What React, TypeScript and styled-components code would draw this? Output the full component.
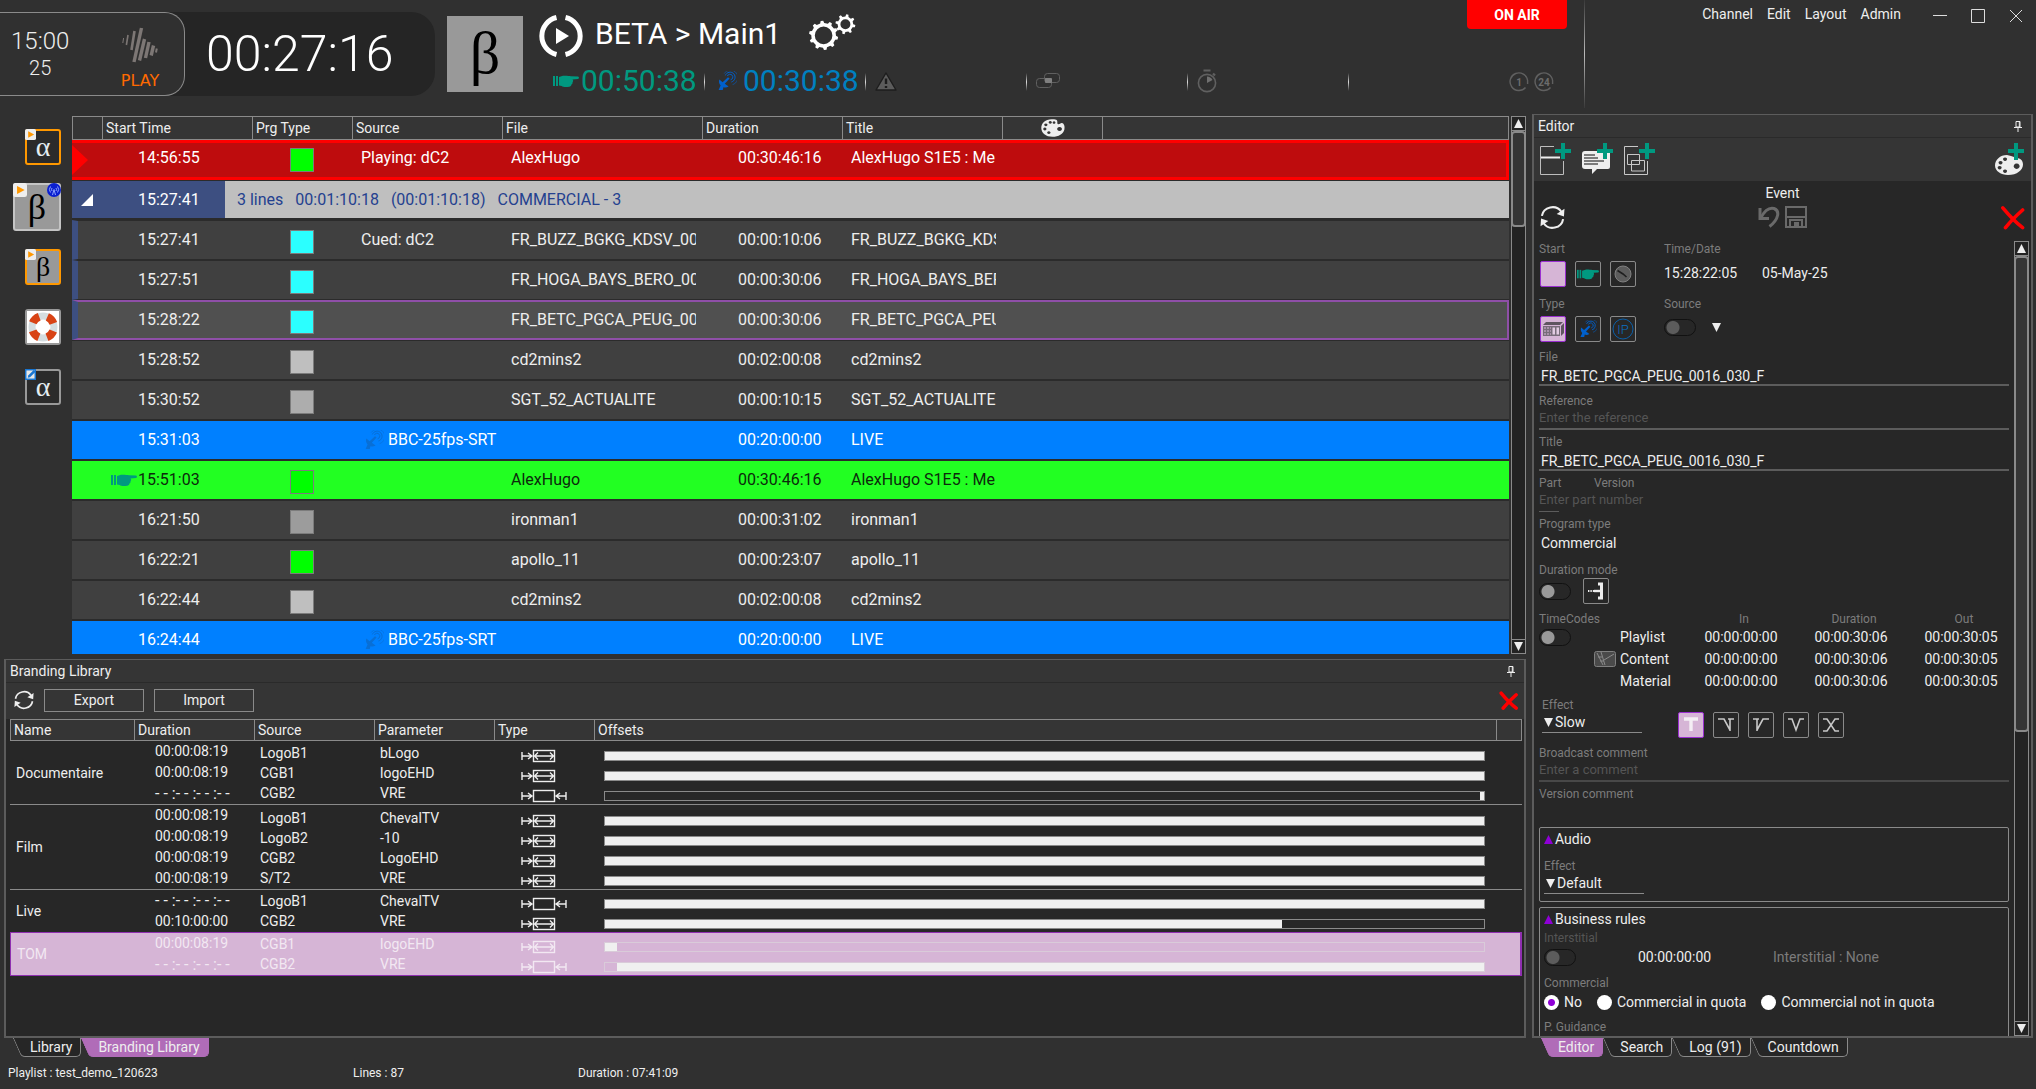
import React from "react";
import styled, { createGlobalStyle, css } from "styled-components";

const c = {
  page: "#303030",
  bar: "#353535",
  well: "#272727",
  row: "#404040",
  line: "#8a8a8a",
  frame: "#5c5c5c",
  text: "#eeeeee",
  dim: "#7c7c7c",
  dimmer: "#555555",
  teal: "#009980",
  blue: "#0080c0",
  dish: "#0060cc",
  pink: "#d6b5d6",
  violet: "#b06cb8",
  purple: "#8f00d6",
};

const Global = createGlobalStyle`
  * { box-sizing: border-box; }
  body { margin: 0; background: ${c.page}; }
  body, button, input, select, table { font-family: Roboto, "Liberation Sans", sans-serif; color: ${c.text}; }
  button { padding: 0; background: none; border: 0; }
  svg { display: block; flex: none; }
`;

/* ---------- icons ---------- */

type IconProps = { size?: number; color?: string };

const Hand = ({ size = 26, color = c.teal }: IconProps) => (
  <svg width={size} height={size / 2} viewBox="0 0 26 13" fill={color}>
    <rect x="0" y="1" width="2" height="10" />
    <rect x="3" y="1" width="2" height="10" />
    <path d="M6 2 L10 .8 C13 .5 16 1 18 1.2 L25 1.4 C26.3 1.8 26.3 3.6 25 4 L19.5 4.4 C20.5 5.4 20.3 6.6 19.5 7.2 C19.8 8.4 19.3 9.2 18.4 9.6 C18.3 11 17.4 11.6 16.2 11.7 C13 12.4 10 12.2 8.6 11 L6 10.4Z" />
  </svg>
);

const Dish = ({ size = 20, color = c.dish }: IconProps) => (
  <svg width={size} height={size} viewBox="0 0 20 20" fill="none" stroke={color}>
    <path d="M2.4 8.4 L5.6 11.2 L11 6.2 L12.6 7.6 L7.8 12.8 L11.6 15.6 C9.5 16.8 7.8 16.8 6.4 16.2 L5.8 19 H1.6 L3.6 14.4 C2 12.6 1.6 10.4 2.4 8.4Z" fill={color} stroke="none" />
    <path d="M8.4 4.4 A5 5 0 1 1 14.4 11" strokeWidth="1" />
    <path d="M7.2 2.6 A7.4 7.4 0 1 1 15.6 13.6" strokeWidth="1" opacity=".6" />
    <path d="M10.4 5 A2.8 2.8 0 1 1 13.6 8.8" strokeWidth="1" />
  </svg>
);

const Refresh = ({ size = 24 }: IconProps) => (
  <svg width={size} height={size} viewBox="0 0 24 24" fill="none" stroke={c.text} strokeWidth="2">
    <path d="M1.8 10.5 A10.3 10 0 0 1 20.5 6.5" />
    <path d="M22.2 13.5 A10.3 10 0 0 1 3.5 17.5" />
    <path d="M23.5 3.5 L23 11 L16 8.6Z M.5 20.5 L1 13 L8 15.4Z" fill={c.text} stroke="none" />
  </svg>
);

const RedX = ({ size = 25, bold = 3.6 }: IconProps & { bold?: number }) => (
  <svg width={size} height={size} viewBox="0 0 25 25" fill="none" stroke="#ff0000" strokeLinecap="round">
    <path d="M2.8 2.8 C8 9 16 17.5 22.6 22.6" strokeWidth={bold} />
    <path d="M22.6 5 C17 10 10 17 5.5 22.6" strokeWidth={bold} />
  </svg>
);

const Pin = () => (
  <svg width="8" height="11" viewBox="0 0 8 11" fill="none" stroke={c.text}>
    <path d="M2 .5 H6 V6 H2Z M0 6.5 H8 M4 6.5 V11" />
    <path d="M5.3 1 V6" />
  </svg>
);

const Triangle = ({ up, color = c.text, size = 9 }: IconProps & { up?: boolean }) => (
  <svg width={size} height={size} viewBox="0 0 9 9" fill={color}>
    <path d={up ? "M4.5 0 L9 9 H0Z" : "M0 0 H9 L4.5 9Z"} />
  </svg>
);

const Palette = ({ size = 24 }: IconProps) => (
  <svg width={size} height={(size * 3) / 4} viewBox="0 0 24 18" fill={c.text}>
    <path
      fillRule="evenodd"
      d="M10.5 .2 C4.5 .2 .3 4 .3 9 C.3 14 4.8 17.8 11.5 17.8 C17.5 17.8 22.5 15 23.4 10.5 C24 7 23 4.6 21.2 4 C19.4 3.6 18.8 5.4 17.2 5.2 C15.4 4.8 17.4 1.8 15.2 .8 C14 .3 12.2 .2 10.5 .2Z
      M9.2 2 a1.6 1.4 0 1 0 .1 0Z M4.8 4.4 a1.6 1.4 0 1 0 .1 0Z M3.8 8.6 a1.6 1.4 0 1 0 .1 0Z M7.8 12.2 a1.7 1.4 0 1 0 .1 0Z M13 2.2 a1.4 1.3 0 1 0 .1 0Z M18.5 8 a2.4 2 0 1 0 .1 0Z"
    />
  </svg>
);

const Plus = () => <path d="M23 0 V16 M15 8 H31" stroke={c.teal} strokeWidth="4" fill="none" />;

const AddEvent = () => (
  <svg width="31" height="32" viewBox="0 0 31 32" fill="none" stroke={c.text}>
    <path d="M14 3.5 H.5 V31.5 H23.5 V18" stroke="#bdbdbd" />
    <path d="M1 14.5 H20" strokeWidth="2" />
    <Plus />
  </svg>
);

const AddComment = () => (
  <svg width="31" height="32" viewBox="0 0 31 32" fill={c.text}>
    <path d="M3 8 H27 Q28 8 28 10 V24 Q28 26 26 26 H15 L10 31 V26 H3 Q0 26 0 23 V11 Q0 8 3 8Z" />
    <path d="M2 12 H13 M2 15 H16 M2 18 H22 M2 21 H16" stroke="#555" strokeWidth="1.5" />
    <Plus />
  </svg>
);

const AddGroup = () => (
  <svg width="31" height="32" viewBox="0 0 31 32" fill="none" stroke="#c8c8c8">
    <path d="M14 3.5 H.5 V31.5 H23.5 V18" />
    <path d="M3.5 11.5 H15.5 V21.5 H3.5Z" />
    <path d="M7.5 17.5 H20.5 V28 H7.5Z" />
    <Plus />
  </svg>
);

const AddPalette = () => (
  <svg width="30" height="32" viewBox="0 0 30 32" fill={c.text}>
    <path
      fillRule="evenodd"
      d="M12 12 C5 12 0 17 0 22.5 C0 28 6 32 13 32 C22 32 28 27 28 21.5 C28 17 25 15.5 22 15 L16 13Z M10 14.5 a2 1.7 0 1 0 .1 0Z M5.5 18 a2 1.7 0 1 0 .1 0Z M4.6 23 a2 1.7 0 1 0 .1 0Z M10 26.5 a2 1.7 0 1 0 .1 0Z M21.6 20.5 a3 2.7 0 1 0 .1 0Z"
    />
    <path d="M21 0 V17 M13 8 H29" stroke={c.teal} strokeWidth="4" />
  </svg>
);

const Undo = () => (
  <svg width="22" height="22" viewBox="0 0 22 22" fill="none" stroke="#6a6a6a" strokeWidth="3">
    <path d="M2 2 V12.5 H11" />
    <path d="M3 11.5 C7 4 12 1.5 16 2.5 C22 4.5 21 13 11.5 20.5" />
  </svg>
);

const Save = () => (
  <svg width="22" height="22" viewBox="0 0 22 22" fill="none" stroke="#6a6a6a" strokeWidth="2">
    <path d="M1 1 H21 V21 H1Z" />
    <path d="M1 11 H21 M5 21 V14 H17 V21" />
    <rect x="9" y="16" width="5" height="5" fill="#6a6a6a" stroke="none" />
  </svg>
);

const PlayRing = () => (
  <svg width="44" height="44" viewBox="0 0 44 44" fill="none" stroke="#fff" strokeWidth="5">
    <path d="M17.5 3.5 A19 19 0 0 0 17.5 40.5 M26.5 3.5 A19 19 0 0 1 26.5 40.5" />
    <path d="M17 14 L30 22 L17 30Z" fill="#fff" stroke="none" />
  </svg>
);

function gearPath(cx: number, cy: number, r: number, tooth: number, hole: number, n: number) {
  const pts: string[] = [];
  const step = (Math.PI * 2) / n;
  for (let i = 0; i < n; i++) {
    const a = i * step + 0.2;
    const w = step * 0.2;
    [[a - w * 1.3, r], [a - w * 0.7, r + tooth], [a + w * 0.7, r + tooth], [a + w * 1.3, r]].forEach(([t, d]) =>
      pts.push(`${(cx + Math.cos(t) * d).toFixed(2)} ${(cy + Math.sin(t) * d).toFixed(2)}`)
    );
  }
  return `M${pts.join("L")}Z M${cx - hole} ${cy} a${hole} ${hole} 0 1 0 ${hole * 2} 0 a${hole} ${hole} 0 1 0 ${-hole * 2} 0Z`;
}

const Gears = () => (
  <svg width="47" height="36" viewBox="0 0 47 36" fill="#fff" fillRule="evenodd">
    <path d={gearPath(14.6, 21.4, 12.4, 2.2, 8.8, 10)} />
    <path d={gearPath(36.4, 10.2, 7.8, 2.2, 5, 8)} />
  </svg>
);

const PlayLogo = () => (
  <svg width="36" height="36" viewBox="0 0 36 36" stroke="#7d7775" strokeWidth="3.4" fill="none">
    <path d="M1.6 11 L.8 16" strokeWidth="1" />
    <path d="M6 8 L4.4 18" strokeWidth="1.6" />
    <path d="M12.5 4 L9.5 23" strokeWidth="2.6" />
    <path d="M19.5 1 L12 35" />
    <path d="M22.5 12 L17.5 33.5" />
    <path d="M27 15 L23.5 31" />
    <path d="M31.5 18.5 L29.2 28.5" />
    <path d="M34.8 21.5 L34 25.5" strokeWidth="2" />
  </svg>
);

const Warning = () => (
  <svg width="22" height="19" viewBox="0 0 22 19" fill="#5c5c5c" stroke="#1d1d1d">
    <path d="M11 1 L21 18 H1Z" strokeLinejoin="round" strokeWidth="1.4" />
    <path d="M11 6.5 V12 M11 14 V16" stroke="#1d1d1d" strokeWidth="2.4" />
  </svg>
);

const Chips = () => (
  <svg width="24" height="16" viewBox="0 0 24 16" fill="none" stroke="#606060">
    <rect x="8.5" y=".5" width="15" height="9" rx="3" />
    <rect x=".5" y="5.5" width="15" height="9" rx="3" />
    <rect x="9" y="5" width="7" height="5" rx="1" fill="#808080" stroke="none" />
  </svg>
);

const Stopwatch = () => (
  <svg width="20" height="24" viewBox="0 0 20 24" fill="none" stroke="#606060" strokeWidth="1.6">
    <circle cx="10" cy="14" r="8.6" />
    <path d="M6.5 1.5 H13.5 M16 4.5 L18 6.5" strokeWidth="2.2" />
    <path d="M10 14 V7.5 A6.5 6.5 0 0 1 15.5 11Z" fill="#707070" stroke="none" />
  </svg>
);

const Loop = ({ label }: { label: string }) => (
  <svg width="20" height="20" viewBox="0 0 20 20" fill="none" stroke="#606060" strokeWidth="1.4">
    <path d="M16.5 15.5 A8.8 8.8 0 1 1 18.6 8.5 V12" />
    <text x="10" y="14" textAnchor="middle" fontSize="10" fontWeight="700" fontFamily="Roboto, sans-serif" fill="#6c6c6c" stroke="none">
      {label}
    </text>
  </svg>
);

const Lifebuoy = () => (
  <svg width="32" height="32" viewBox="0 0 32 32" fill="none">
    <rect width="32" height="32" fill="#fff" />
    <circle cx="16" cy="16" r="11" stroke="#d5dde0" strokeWidth="7" />
    <circle cx="16" cy="16" r="11" stroke="#d84315" strokeWidth="8" strokeDasharray="9 8.28" strokeDashoffset="-4.1" />
  </svg>
);

const PlayBadge = () => (
  <svg width="100%" height="100%" viewBox="0 0 12 12">
    <rect width="12" height="12" rx="2" fill="#eee" />
    <path d="M3.5 2.5 L10 6 L3.5 9.5Z" fill="#ff9800" />
  </svg>
);

const EditBadge = () => (
  <svg width="100%" height="100%" viewBox="0 0 12 12">
    <rect x=".8" y=".8" width="10.4" height="10.4" fill="#e8e8e8" stroke="#1976d2" strokeWidth="1.6" />
    <path d="M3 9.5 L3.5 7 L9.5 1 L11.5 3 L5.5 9Z" fill="#1976d2" />
  </svg>
);

const AntennaBadge = () => (
  <svg width="100%" height="100%" viewBox="0 0 14 14" fill="none" stroke="#8fa3ff">
    <circle cx="7" cy="7" r="7" fill="#0a1fd0" stroke="none" />
    <path d="M3.5 3.5 A5 5 0 0 0 3.5 9.5 M10.5 3.5 A5 5 0 0 1 10.5 9.5 M5 5 A2.6 2.6 0 0 0 5 8 M9 5 A2.6 2.6 0 0 1 9 8 M7 6.5 L5.5 12 M7 6.5 L8.5 12" />
  </svg>
);

const OffsetIn = () => (
  <svg width="46" height="14" viewBox="0 0 46 14" fill="none" stroke="currentColor" strokeWidth="1.4">
    <path d="M1 3 V11 M1 7 H11 M7 4 L11 7 L7 10" />
    <rect x="12.5" y="1.5" width="21" height="11" />
    <path d="M14 7 H32 M17 3.5 L13.5 7 L17 10.5 M29 3.5 L32.5 7 L29 10.5" />
  </svg>
);

const OffsetBoth = () => (
  <svg width="46" height="14" viewBox="0 0 46 14" fill="none" stroke="currentColor" strokeWidth="1.4">
    <path d="M1 3 V11 M1 7 H11 M7 4 L11 7 L7 10" />
    <rect x="12.5" y="1.5" width="21" height="11" />
    <path d="M45 3 V11 M45 7 H35 M39 4 L35 7 L39 10" />
  </svg>
);

const ClockFace = () => (
  <svg width="18" height="18" viewBox="0 0 18 18">
    <circle cx="9" cy="9" r="8" fill="#5c5c5c" stroke="#808080" />
    <path d="M3.5 5.5 L9 9 L12.5 12" stroke="#1e1e1e" strokeWidth="1.6" fill="none" />
  </svg>
);

const Server = () => (
  <svg width="22" height="15" viewBox="0 0 22 15" fill="#5f5560">
    <path d="M4 0 H21 L18 3 H1Z" />
    <path d="M19 4 L22 1 V11 L19 14Z" />
    <path d="M1 4 H18 V14 H1Z" fill="#786c7a" />
    <path d="M2 6 H9 M2 9 H9 M2 12 H9" stroke="#d6b5d6" strokeDasharray="2 1" />
    <path d="M10.5 5.5 H13 V12.5 H10.5Z M14.5 5.5 H17 V12.5 H14.5Z" fill="#e2cbe2" />
  </svg>
);

const IpBadge = () => (
  <svg width="22" height="22" viewBox="0 0 22 22">
    <circle cx="11" cy="11" r="10" fill="none" stroke="#0b5fa8" />
    <text x="11" y="16" textAnchor="middle" fontSize="13" fontFamily="Roboto, sans-serif" fontWeight="300" fill="#0b6fc4">
      IP
    </text>
  </svg>
);

const ModeArrow = () => (
  <svg width="18" height="18" viewBox="0 0 18 18" fill="none" stroke={c.text}>
    <path d="M1 9 H7" strokeWidth="2" strokeDasharray="1.4 1" />
    <path d="M7 9 H14" strokeWidth="2.4" />
    <path d="M11 2 H14.5 V16 H11" strokeWidth="3" />
  </svg>
);

const Clap = () => (
  <svg width="22" height="16" viewBox="0 0 22 16">
    <rect x=".5" y=".5" width="21" height="15" rx="2" fill="#4a4a4a" stroke="#808080" />
    <path d="M3 2 L9 14 M7 1 L11 14 M10 9 L20 3 M4 6 H8 M6 10 H10" stroke="#8a8a8a" />
  </svg>
);

const effectPaths = ["M2 3 H16 M9 3 V15", "M1 3 H7 L13 14 M11 3 H17 M13 3 V15", "M1 3 H7 M5 3 V15 M5 14 L11 3 H17", "M1 3 H5 L9 14 L13 3 H17", "M1 3 H5 L13 15 H17 M1 15 H5 L13 3 H17"];

const EffectIcon = ({ index }: { index: number }) => (
  <svg width="18" height="18" viewBox="0 0 18 18" fill="none" stroke={index ? "#c8c8c8" : "#f4eef4"} strokeWidth={index ? 1.6 : 3.4}>
    <path d={effectPaths[index]} />
  </svg>
);

/* ---------- shell ---------- */

const Window = styled.div`
  height: 100vh;
  display: flex;
  flex-direction: column;
  background: ${c.page};
  overflow: hidden;
`;

const Header = styled.header`
  height: 114px;
  display: flex;
  flex: none;
`;

const ClockBar = styled.div`
  display: flex;
  width: 435px;
  height: 84px;
  margin-top: 12px;
  background: #252525;
  border-radius: 0 24px 24px 0;
`;

const ClockSide = styled.div`
  width: 185px;
  display: flex;
  justify-content: space-between;
  padding: 14px 12px 0 11px;
  background: ${c.page};
  border: 1px solid ${c.line};
  border-left: 0;
  border-radius: 0 20px 20px 0;
`;

const MiniClock = styled.div`
  display: flex;
  flex-direction: column;
  align-items: center;
  font-weight: 300;
  font-size: 24px;
  line-height: 28px;
  small {
    font-size: 20px;
    line-height: 26px;
  }
`;

const Brand = styled.div`
  display: flex;
  flex-direction: column;
  align-items: center;
  width: 64px;
  gap: 10px;
  font-family: "DejaVu Sans", sans-serif;
  font-size: 16px;
  line-height: 16px;
  color: #ff6a00;
`;

const BigClock = styled.div`
  padding-left: 21px;
  font-size: 50px;
  font-weight: 300;
  line-height: 84px;
  color: #fff;
`;

const ChannelTile = styled.div`
  width: 76px;
  height: 76px;
  margin: 16px 16px 0 12px;
  background: #999;
  color: #000;
  font-family: "Liberation Serif", serif;
  font-size: 60px;
  line-height: 74px;
  text-align: center;
`;

const ChannelInfo = styled.div`
  flex: 1;
  display: flex;
  flex-direction: column;
`;

const TitleRow = styled.div`
  display: flex;
  align-items: flex-start;
  height: 62px;
`;

const ChannelTitle = styled.h1`
  display: flex;
  align-items: flex-start;
  gap: 12px;
  flex: 1;
  height: 44px;
  margin: 14px 0 0;
  font-size: 30px;
  font-weight: 400;
  line-height: 40px;
  color: #fff;
  span {
    padding-right: 16px;
  }
`;

const OnAir = styled.div`
  width: 100px;
  height: 29px;
  margin-right: 17px;
  border-radius: 0 0 4px 4px;
  background: #f00;
  color: #fff;
  font-size: 14px;
  font-weight: 700;
  line-height: 30px;
  text-align: center;
`;

const Counters = styled.div`
  display: flex;
  padding-left: 5px;
`;

const Counter = styled.div<{ $color?: string; $wide?: boolean }>`
  width: 161px;
  height: 40px;
  display: flex;
  align-items: center;
  gap: ${(p) => (p.$wide ? 6 : 2)}px;
  padding: 0 0 2px ${(p) => (p.$wide ? 12 : 9)}px;
  font-size: 30px;
  line-height: 36px;
  color: ${(p) => p.$color};
  background: linear-gradient(transparent, #ddd, transparent) right 11px / 1px 18px no-repeat;
`;

const Loops = styled.div`
  display: flex;
  flex: 1;
  align-items: center;
  justify-content: flex-end;
  gap: 5px;
  padding-right: 30px;
`;

const MenuArea = styled.div`
  width: 452px;
  display: flex;
  justify-content: flex-end;
  gap: 32px;
  padding: 0 13px;
  font-size: 14px;
  background: linear-gradient(#3a3a3a, #bbb, #3a3a3a) left top / 1px 108px no-repeat;
`;

const Menu = styled.nav`
  display: flex;
  gap: 14px;
  line-height: 28px;
  a {
    color: ${c.text};
    text-decoration: none;
  }
`;

const WindowButtons = styled.div`
  display: flex;
  gap: 24px;
  height: 31px;
  align-items: center;
`;

const Main = styled.main`
  flex: 1;
  min-height: 0;
  display: grid;
  grid-template-columns: minmax(0, 1fr) 501px;
  column-gap: 6px;
  padding-right: 3px;
`;

const Left = styled.div`
  min-height: 0;
  display: grid;
  grid-template-rows: minmax(0, 1fr) auto;
  row-gap: 5px;
`;

const Upper = styled.section`
  min-height: 0;
  display: flex;
  padding-top: 2px;
`;

const Rail = styled.nav`
  width: 72px;
  display: flex;
  flex-direction: column;
  align-items: flex-end;
  gap: 24px;
  padding: 13px 11px 0 0;
`;

const RailButton = styled.button<{ $tone: string; $light?: boolean; $big?: boolean }>`
  position: relative;
  width: ${(p) => (p.$big ? 48 : 36)}px;
  height: ${(p) => (p.$big ? 48 : 36)}px;
  margin: ${(p) => (p.$big ? "-6px 0" : "0")};
  border: 2px solid ${(p) => p.$tone};
  border-radius: 3px;
  background: ${(p) => (p.$light ? "#999" : "#2b2b2b")};
  color: ${(p) => (p.$light ? "#000" : "#e4eef2")};
  font-family: "Liberation Serif", serif;
  font-size: ${(p) => (p.$big ? 36 : 28)}px;
  line-height: ${(p) => (p.$big ? 42 : 28)}px;
`;

const Badge = styled.span<{ $right?: boolean; $big?: boolean }>`
  position: absolute;
  top: -2px;
  ${(p) => (p.$right ? "right: -2px;" : "left: -2px;")}
  width: ${(p) => (p.$big ? 14 : 11)}px;
  height: ${(p) => (p.$big ? 14 : 11)}px;
`;

/* ---------- scrollbar ---------- */

const ScrollTrack = styled.div`
  width: 15px;
  display: flex;
  flex-direction: column;
  flex: none;
  border: 1px solid ${c.line};
  background: #232323;
`;

const ScrollArrow = styled.button<{ $end?: boolean }>`
  height: 14px;
  display: flex;
  align-items: center;
  justify-content: center;
  margin-top: ${(p) => (p.$end ? "auto" : "0")};
  border: 0 solid ${c.line};
  border-${(p) => (p.$end ? "top" : "bottom")}-width: 1px;
`;

const ScrollThumb = styled.div<{ $share: number }>`
  height: ${(p) => p.$share}%;
  margin: 0 -1px;
  border: 2px solid ${c.line};
  border-radius: 4px;
  background: ${c.bar};
`;

const Scrollbar = ({ share }: { share: number }) => (
  <ScrollTrack>
    <ScrollArrow aria-label="Scroll up"><Triangle up /></ScrollArrow>
    <ScrollThumb $share={share} />
    <ScrollArrow aria-label="Scroll down" $end><Triangle /></ScrollArrow>
  </ScrollTrack>
);

/* ---------- playlist ---------- */

const PlaylistBox = styled.div`
  flex: 1;
  min-width: 0;
  overflow: hidden;
`;

const PlaylistTable = styled.table`
  width: 100%;
  table-layout: fixed;
  border-collapse: separate;
  border-spacing: 0;
  font-size: 16px;
  line-height: 20px;
`;

const HeadCell = styled.th`
  height: 24px;
  padding: 0 3px;
  border: 1px solid ${c.line};
  border-right-width: 0;
  background: ${c.bar};
  font-size: 14px;
  font-weight: 400;
  line-height: 20px;
  text-align: left;
  &:last-child {
    border-right-width: 1px;
  }
  svg {
    margin: 0 auto;
  }
`;

type Kind = "playing" | "child" | "selected" | "normal" | "live" | "manual";

const rowLook: Record<Kind, ReturnType<typeof css>> = {
  playing: css`
    background: #be0c0d;
    color: #fff;
    & > td { border: 0 solid #f00; border-width: 3px 0; padding-bottom: 4px; }
    & > td:last-child { border-right-width: 3px; }
  `,
  child: css`
    background: ${c.row};
    & > td:first-child { border-left: 6px solid #3d4f81; }
  `,
  selected: css`
    background: #505050;
    & > td { border-color: #8f4fa8; border-width: 2px 0; }
    & > td:first-child { border-left: 6px solid #3d4f81; }
    & > td:last-child { border-right: 2px solid #8f4fa8; }
  `,
  normal: css`background: ${c.row};`,
  live: css`background: #0080ff; color: #fff;`,
  manual: css`background: #22ff22; color: #0c2a0c;`,
};

const BodyRow = styled.tr<{ $kind: Kind }>`
  & > td {
    height: 40px;
    padding: 0 6px 0 9px;
    border: 0 solid #2b2b2b;
    border-width: 1px 0;
    white-space: nowrap;
    overflow: hidden;
  }
  & > td:first-child { padding: 0; }
  ${(p) => rowLook[p.$kind]}
`;

const Clip = styled.div`
  display: flex;
  overflow: hidden;
`;

const StartSlot = styled.div`
  display: flex;
  align-items: center;
`;

const HandSlot = styled.span`
  width: 27px;
`;

const DurationSlot = styled.div`
  padding-left: 27px;
`;

const SourceSlot = styled.div`
  display: flex;
  align-items: center;
  gap: 4px;
  margin-left: 3px;
`;

const Swatch = styled.span<{ $color: string }>`
  display: block;
  width: 24px;
  height: 24px;
  margin: 3px 0 0 29px;
  border: 1px solid #7c7c7c;
  background: ${(p) => p.$color};
`;

const GroupRow = styled.tr`
  & > td {
    height: 40px;
    padding: 0 12px;
    border: 0 solid #2b2b2b;
    border-width: 1px 0 2px;
    background: linear-gradient(90deg, #3d4f81 0 123px, #bfbfbf 123px);
    color: #24418f;
    white-space: pre;
  }
  & > td:first-child {
    background: #3d4f81;
    padding: 0 0 0 9px;
  }
`;

const GroupLine = styled.div`
  display: flex;
  gap: 12px;
  margin-left: 24px;
  span:first-child {
    width: 87px;
    color: #fff;
  }
`;

type Item = { kind: Kind; start: string; color?: string; source?: string; file?: string; dur: string; title: string };

const items: Item[] = [
  { kind: "playing", start: "14:56:55", color: "#00ff00", source: "Playing: dC2", file: "AlexHugo", dur: "00:30:46:16", title: "AlexHugo S1E5 : Me" },
  { kind: "child", start: "15:27:41", color: "#2bffff", source: "Cued: dC2", file: "FR_BUZZ_BGKG_KDSV_00", dur: "00:00:10:06", title: "FR_BUZZ_BGKG_KDS" },
  { kind: "child", start: "15:27:51", color: "#2bffff", file: "FR_HOGA_BAYS_BERO_00", dur: "00:00:30:06", title: "FR_HOGA_BAYS_BER" },
  { kind: "selected", start: "15:28:22", color: "#2bffff", file: "FR_BETC_PGCA_PEUG_00", dur: "00:00:30:06", title: "FR_BETC_PGCA_PEU" },
  { kind: "normal", start: "15:28:52", color: "#bfbfbf", file: "cd2mins2", dur: "00:02:00:08", title: "cd2mins2" },
  { kind: "normal", start: "15:30:52", color: "#adadad", file: "SGT_52_ACTUALITE", dur: "00:00:10:15", title: "SGT_52_ACTUALITE" },
  { kind: "live", start: "15:31:03", source: "BBC-25fps-SRT", dur: "00:20:00:00", title: "LIVE" },
  { kind: "manual", start: "15:51:03", color: "#00ff00", file: "AlexHugo", dur: "00:30:46:16", title: "AlexHugo S1E5 : Me" },
  { kind: "normal", start: "16:21:50", color: "#9c9c9c", file: "ironman1", dur: "00:00:31:02", title: "ironman1" },
  { kind: "normal", start: "16:22:21", color: "#00ff00", file: "apollo_11", dur: "00:00:23:07", title: "apollo_11" },
  { kind: "normal", start: "16:22:44", color: "#bfbfbf", file: "cd2mins2", dur: "00:02:00:08", title: "cd2mins2" },
  { kind: "live", start: "16:24:44", source: "BBC-25fps-SRT", dur: "00:20:00:00", title: "LIVE" },
];

const PlaylistRow = ({ item }: { item: Item }) => (
  <BodyRow $kind={item.kind}>
    <td>
      {item.kind === "playing" && (
        <svg width="16" height="30" viewBox="0 0 16 30"><path d="M0 0 L16 15 L0 30Z" fill="#f00" /></svg>
      )}
    </td>
    <td>
      <StartSlot>
        <HandSlot>{item.kind === "manual" && <Hand />}</HandSlot>
        {item.start}
      </StartSlot>
    </td>
    <td>{item.color && <Swatch $color={item.color} />}</td>
    <td>{item.kind === "live" ? <SourceSlot><Dish color="#086fd6" />{item.source}</SourceSlot> : item.source}</td>
    <td><Clip>{item.file}</Clip></td>
    <td><DurationSlot>{item.dur}</DurationSlot></td>
    <td><Clip>{item.title}</Clip></td>
    <td />
    <td />
  </BodyRow>
);

const Playlist = () => (
  <PlaylistBox>
    <PlaylistTable>
      <colgroup>
        {[30, 150, 100, 150, 200, 140, 160, 100].map((w, i) => <col key={i} width={w} />)}
        <col />
      </colgroup>
      <thead>
        <tr>
          {["", "Start Time", "Prg Type", "Source", "File", "Duration", "Title"].map((h) => <HeadCell key={h}>{h}</HeadCell>)}
          <HeadCell><Palette /></HeadCell>
          <HeadCell />
        </tr>
      </thead>
      <tbody>
        <PlaylistRow item={items[0]} />
        <GroupRow>
          <td>
            <svg width="12" height="12" viewBox="0 0 12 12" fill="#fff"><path d="M12 0 V12 H0Z" /></svg>
          </td>
          <td colSpan={8}>
            <GroupLine>
              <span>15:27:41</span>
              <span>3 lines</span>
              <span>00:01:10:18</span>
              <span>(00:01:10:18)</span>
              <span>COMMERCIAL - 3</span>
            </GroupLine>
          </td>
        </GroupRow>
        {items.slice(1).map((it) => <PlaylistRow key={it.start} item={it} />)}
      </tbody>
    </PlaylistTable>
  </PlaylistBox>
);

const PlaylistScroll = styled.div`
  display: flex;
  padding: 0 0 0 2px;
`;

/* ---------- panels ---------- */

const Panel = styled.section`
  display: flex;
  flex-direction: column;
  flex: 1;
  min-height: 0;
  border: 2px solid ${c.frame};
  border-top-width: 1px;
  background: ${c.well};
`;

const PanelTitle = styled.h2`
  display: flex;
  justify-content: space-between;
  align-items: center;
  height: 23px;
  flex: none;
  margin: 0;
  padding: 0 9px 0 4px;
  background: ${c.bar};
  border-bottom: 1px solid #2a2a2a;
  font-size: 14px;
  font-weight: 400;
  line-height: 20px;
`;

const Lower = styled.div`
  display: flex;
  flex-direction: column;
  padding-left: 4px;
`;

const BrandingBody = styled.div`
  height: 317px;
  padding: 0 2px 0 4px;
`;

const Toolbar = styled.div`
  display: flex;
  align-items: center;
  gap: 10px;
  height: 36px;
  padding: 0 6px 2px 8px;
  background: ${c.bar};
  & > :last-child { margin-left: auto; }
`;

const TextButton = styled.button`
  width: 100px;
  height: 23px;
  border: 1px solid ${c.line};
  font-size: 14px;
  line-height: 20px;
`;

const BrandTable = styled.table`
  width: 100%;
  table-layout: fixed;
  border-collapse: separate;
  border-spacing: 0;
  font-size: 14px;
  th { height: 22px; }
`;

const BrandRow = styled.tr<{ $selected?: boolean }>`
  & > td {
    padding: 0 6px;
    border: 0 solid ${c.line};
    border-bottom-width: 1px;
    vertical-align: middle;
  }
  &:nth-child(3) > td { border-bottom-width: 0; }
  ${(p) =>
    p.$selected &&
    css`
      background: ${c.pink};
      color: #f2e8f2;
      & > td { border-color: #8f2fb0; border-width: 1px 0; }
      & > td:first-child { border-left-width: 1px; }
      & > td:last-child { border-right-width: 2px; }
    `}
`;

const TextCell = styled.td`
  && { vertical-align: bottom; padding-bottom: 1px; }
`;

const DrawCell = styled.td`
  && { vertical-align: bottom; }
`;

const Lines = styled.div<{ $pitch: number; $indent?: number }>`
  display: grid;
  grid-auto-rows: ${(p) => p.$pitch}px;
  align-items: center;
  line-height: ${(p) => p.$pitch}px;
  padding-left: ${(p) => p.$indent || 0}px;
`;

const DrawLines = styled(Lines)`
  align-items: end;
  svg { margin-bottom: 1px; }
`;

const Dashes = styled.span`
  font-size: 16px;
  white-space: pre;
`;

const Bar = styled.div`
  display: flex;
  height: 10px;
  margin: 0 5px 3px 4px;
  border: 1px solid rgba(220, 220, 220, 0.55);
`;

const BarFill = styled.div`
  background: #f0f0f0;
`;

type Line = { dur?: string; src: string; par: string; from: number; to: number };
type Group = { name: string; selected?: boolean; lines: Line[] };

const full = { from: 0, to: 100 };
const groups: Group[] = [
  { name: "Documentaire", lines: [
    { dur: "00:00:08:19", src: "LogoB1", par: "bLogo", ...full },
    { dur: "00:00:08:19", src: "CGB1", par: "logoEHD", ...full },
    { src: "CGB2", par: "VRE", from: 99.6, to: 100 } ] },
  { name: "Film", lines: [
    { dur: "00:00:08:19", src: "LogoB1", par: "ChevalTV", ...full },
    { dur: "00:00:08:19", src: "LogoB2", par: "-10", ...full },
    { dur: "00:00:08:19", src: "CGB2", par: "LogoEHD", ...full },
    { dur: "00:00:08:19", src: "S/T2", par: "VRE", ...full } ] },
  { name: "Live", lines: [
    { src: "LogoB1", par: "ChevalTV", ...full },
    { dur: "00:10:00:00", src: "CGB2", par: "VRE", from: 0, to: 77 } ] },
  { name: "TOM", selected: true, lines: [
    { dur: "00:00:08:19", src: "CGB1", par: "logoEHD", from: 0, to: 1.4 },
    { src: "CGB2", par: "VRE", from: 1.4, to: 100 } ] },
];

const Branding = () => (
  <Panel>
    <PanelTitle>Branding Library<Pin /></PanelTitle>
    <Toolbar>
      <button aria-label="Refresh"><Refresh size={20} /></button>
      <TextButton>Export</TextButton>
      <TextButton>Import</TextButton>
      <button aria-label="Delete"><RedX size={19} bold={4.6} /></button>
    </Toolbar>
    <BrandingBody>
      <BrandTable>
        <colgroup>
          {[124, 120, 120, 120, 100].map((w, i) => <col key={i} width={w} />)}
          <col />
          <col width={26} />
        </colgroup>
        <thead>
          <tr>
            {["Name", "Duration", "Source", "Parameter", "Type", "Offsets", ""].map((h) => <HeadCell key={h}>{h}</HeadCell>)}
          </tr>
        </thead>
        <tbody>
          {groups.map((g) => (
            <BrandRow key={g.name} $selected={g.selected}>
              <td>{g.name}</td>
              <td>
                <Lines $pitch={21} $indent={15}>
                  {g.lines.map((l, i) => (l.dur ? <span key={i}>{l.dur}</span> : <Dashes key={i}>- - :- - :- - :- -</Dashes>))}
                </Lines>
              </td>
              <TextCell><Lines $pitch={20}>{g.lines.map((l, i) => <span key={i}>{l.src}</span>)}</Lines></TextCell>
              <TextCell><Lines $pitch={20}>{g.lines.map((l, i) => <span key={i}>{l.par}</span>)}</Lines></TextCell>
              <DrawCell>
                <DrawLines $pitch={20} $indent={21}>
                  {g.lines.map((l, i) => (l.dur ? <OffsetIn key={i} /> : <OffsetBoth key={i} />))}
                </DrawLines>
              </DrawCell>
              <DrawCell>
                <DrawLines $pitch={20}>
                  {g.lines.map((l, i) => (
                    <Bar key={i}><BarFill style={{ marginLeft: `${l.from}%`, width: `${l.to - l.from}%` }} /></Bar>
                  ))}
                </DrawLines>
              </DrawCell>
              <td />
            </BrandRow>
          ))}
        </tbody>
      </BrandTable>
    </BrandingBody>
  </Panel>
);

const Tabs = styled.nav`
  display: flex;
  height: 20px;
  flex: none;
  padding-left: 6px;
`;

const Tab = styled.button<{ $active?: boolean }>`
  position: relative;
  z-index: 0;
  height: 19px;
  margin-right: -5px;
  padding: 0 11px 0 20px;
  font-size: 14px;
  line-height: 17px;
  &::before,
  &::after {
    content: "";
    position: absolute;
    z-index: -1;
    inset: 0 12px 0 7px;
    border: 1px solid ${(p) => (p.$active ? c.violet : c.line)};
    border-width: 0 0 1px 1px;
    border-radius: 0 0 0 4px;
    background: ${(p) => (p.$active ? c.violet : "#262626")};
    transform: skewX(24deg);
  }
  &::after {
    inset: 0 2px 0 20px;
    border-width: 0 1px 1px 0;
    border-radius: 0 0 5px 0;
    transform: none;
  }
`;

/* ---------- editor ---------- */

const EditorColumn = styled.div`
  display: flex;
  flex-direction: column;
  min-height: 0;
`;

const EditorTools = styled.div`
  display: flex;
  align-items: center;
  gap: 11px;
  height: 43px;
  flex: none;
  padding: 0 6px 2px;
  background: ${c.bar};
  & > :last-child { margin-left: auto; }
`;

const EventBar = styled.div`
  display: grid;
  grid-template-columns: 1fr auto 1fr;
  grid-template-rows: 22px 26px;
  align-items: center;
  height: 60px;
  flex: none;
  padding: 1px 6px 0;
  font-size: 14px;
  & > :first-child { grid-column: 1 / -1; text-align: center; }
  & > :last-child { justify-self: end; }
`;

const EventActions = styled.div`
  display: flex;
  gap: 5px;
`;

const ScrollArea = styled.div`
  flex: 1;
  min-height: 0;
  display: flex;
  gap: 5px;
  padding-right: 2px;
`;

const Form = styled.form`
  flex: 1;
  min-width: 0;
  overflow: hidden;
  padding: 1px 0 0 5px;
  font-size: 14px;
  line-height: 20px;
`;

const Row = styled.div<{ $top?: number; $cols?: string; $indent?: number }>`
  display: grid;
  grid-template-columns: ${(p) => p.$cols || "1fr"};
  margin-top: ${(p) => p.$top || 0}px;
  padding-left: ${(p) => p.$indent || 0}px;
`;

const labelLook = css<{ $dim?: boolean }>`
  display: block;
  color: ${(p) => (p.$dim ? c.dimmer : c.dim)};
  font-size: 12px;
  font-weight: 400;
  line-height: 14px;
`;

const Label = styled.label<{ $dim?: boolean }>`${labelLook}`;
const Caption = styled.div<{ $dim?: boolean }>`${labelLook}`;

const LineInput = styled.input<{ $faint?: boolean; $empty?: boolean }>`
  display: block;
  width: 100%;
  height: 22px;
  padding: ${(p) => (p.$empty ? "0 0 2px" : "3px 0 0 2px")};
  border: 0;
  border-bottom: 2px solid ${(p) => (p.$faint ? "#484848" : "#5c5c5c")};
  border-radius: 0;
  background: none;
  outline: 0;
  font-size: ${(p) => (p.$empty ? 13 : 14)}px;
  &::placeholder { color: ${c.dimmer}; }
`;

const PartField = styled.div`
  height: 22px;
  &::after {
    content: "";
    display: block;
    width: 20px;
    border-bottom: 1px solid #5c5c5c;
  }
  input {
    display: block;
    width: 130px;
    height: 21px;
    padding: 0 0 2px;
    border: 0;
    background: none;
    font-size: 13px;
  }
  input::placeholder { color: ${c.dimmer}; }
`;

const PlainInput = styled.input`
  width: 86px;
  height: 24px;
  padding: 0;
  border: 0;
  background: none;
  font-size: 14px;
`;

const IconSet = styled.div`
  display: flex;
  gap: 9px;
  padding: 5px 0 0 1px;
`;

const IconButton = styled.button<{ $on?: boolean }>`
  width: 26px;
  height: 26px;
  display: flex;
  align-items: center;
  justify-content: center;
  border: 1px solid ${(p) => (p.$on ? "#9a2fd0" : c.line)};
  border-radius: 2px;
  background: ${(p) => (p.$on ? c.pink : "none")};
`;

const Controls = styled.div<{ $gap: number; $top?: number }>`
  display: flex;
  align-items: center;
  gap: ${(p) => p.$gap}px;
  padding-top: ${(p) => p.$top || 0}px;
`;

const Toggle = styled.input<{ $dim?: boolean }>`
  appearance: none;
  display: block;
  width: 32px;
  height: 17px;
  flex: none;
  margin: 0;
  border: 1px solid #111;
  border-radius: 9px;
  background: radial-gradient(circle at 8px 50%, ${(p) => (p.$dim ? "#5c5c5c" : "#999")} 6px, transparent 7px);
`;

const SelectBox = styled.div`
  display: flex;
  align-items: center;
  gap: 2px;
  width: 100px;
  height: 21px;
  padding-left: 2px;
  border-bottom: 1px solid ${c.line};
`;

const Select = styled.select`
  appearance: none;
  flex: 1;
  height: 20px;
  padding: 0;
  border: 0;
  background: none;
  font-size: 14px;
`;

const TypeSelect = styled(Select)`
  display: block;
  width: 140px;
  height: 24px;
  padding-left: 2px;
`;

const TimeTable = styled.table`
  width: 100%;
  table-layout: fixed;
  border-collapse: collapse;
  td, th { padding: 0; }
  td { height: 22px; }
  th { ${labelLook} display: table-cell; }
`;

const Tc = styled.span<{ $head?: boolean }>`
  display: block;
  width: 74px;
  margin-left: ${(p) => (p.$head ? 19 : 16)}px;
  text-align: center;
`;

const Box = styled.section<{ $open?: boolean }>`
  margin-top: 5px;
  padding: 0 4px ${(p) => (p.$open ? 20 : 7)}px;
  border: 1px solid ${c.line};
  border-radius: 2px;
`;

const BoxTitle = styled.h3`
  display: flex;
  align-items: center;
  gap: 2px;
  margin: 0;
  font-size: 14px;
  font-weight: 400;
  line-height: 23px;
`;

const Spacer = styled.div`
  height: 21px;
`;

const Radios = styled.div`
  display: flex;
  gap: 15px;
  padding: 2px 0 8px;
  label {
    display: flex;
    align-items: center;
    gap: 5px;
    height: 20px;
  }
`;

const Radio = styled.input`
  appearance: none;
  width: 15px;
  height: 15px;
  margin: 0;
  border-radius: 50%;
  background: #fff;
  &:checked { background: radial-gradient(circle, ${c.purple} 3px, #fff 4px); }
`;

const Muted = styled.span`
  color: ${c.dim};
  margin-left: 37px;
`;

const TcInput = styled(PlainInput)`
  margin-left: 50px;
`;

const timeRows = [
  { name: "Playlist", icon: false },
  { name: "Content", icon: true },
  { name: "Material", icon: false },
];

const EditorForm = () => (
  <Form onSubmit={(e) => e.preventDefault()}>
    <Row $cols="125px 98px 1fr">
      <div>
        <Caption>Start</Caption>
        <IconSet>
          <IconButton type="button" $on aria-label="Sequential start" />
          <IconButton type="button" aria-label="Manual start"><Hand size={22} /></IconButton>
          <IconButton type="button" aria-label="Fixed start"><ClockFace /></IconButton>
        </IconSet>
      </div>
      <div>
        <Label htmlFor="time">Time/Date</Label>
        <Controls $gap={0} $top={5}><PlainInput id="time" defaultValue="15:28:22:05" /></Controls>
      </div>
      <Controls $gap={0} $top={17}><PlainInput aria-label="Date" defaultValue="05-May-25" /></Controls>
    </Row>
    <Row $top={10} $cols="125px 1fr">
      <div>
        <Caption>Type</Caption>
        <IconSet>
          <IconButton type="button" $on aria-label="Server"><Server /></IconButton>
          <IconButton type="button" aria-label="Live"><Dish size={18} /></IconButton>
          <IconButton type="button" aria-label="IP"><IpBadge /></IconButton>
        </IconSet>
      </div>
      <div>
        <Label htmlFor="source">Source</Label>
        <Controls $gap={16} $top={8}>
          <Toggle id="source" type="checkbox" $dim />
          <button type="button" aria-label="Choose source"><Triangle /></button>
        </Controls>
      </div>
    </Row>
    <Row $top={8}>
      <Label htmlFor="file">File</Label>
      <LineInput id="file" defaultValue="FR_BETC_PGCA_PEUG_0016_030_F" />
    </Row>
    <Row $top={8}>
      <Label htmlFor="reference">Reference</Label>
      <LineInput id="reference" $empty placeholder="Enter the reference" />
    </Row>
    <Row $top={5}>
      <Label htmlFor="title">Title</Label>
      <LineInput id="title" defaultValue="FR_BETC_PGCA_PEUG_0016_030_F" />
    </Row>
    <Row $top={5} $cols="55px 1fr">
      <Label htmlFor="part">Part</Label>
      <Caption>Version</Caption>
    </Row>
    <PartField><input id="part" placeholder="Enter part number" /></PartField>
    <Row $top={5}>
      <Label htmlFor="program">Program type</Label>
      <TypeSelect id="program"><option>Commercial</option></TypeSelect>
    </Row>
    <Row $top={8}>
      <Label htmlFor="mode">Duration mode</Label>
      <Controls $gap={12} $top={1}>
        <Toggle id="mode" type="checkbox" />
        <IconButton type="button" aria-label="Duration to end"><ModeArrow /></IconButton>
      </Controls>
    </Row>
    <Row $top={8} $cols="55px 1fr">
      <div>
        <Label htmlFor="timecodes">TimeCodes</Label>
        <Controls $gap={0} $top={3}><Toggle id="timecodes" type="checkbox" /></Controls>
      </div>
      <TimeTable>
        <colgroup><col width={26} /><col width={68} /><col width={110} /><col width={110} /><col /></colgroup>
        <thead>
          <tr><th /><th /><th><Tc $head>In</Tc></th><th><Tc $head>Duration</Tc></th><th><Tc $head>Out</Tc></th></tr>
        </thead>
        <tbody>
          {timeRows.map((r) => (
            <tr key={r.name}>
              <td>{r.icon && <Clap />}</td>
              <td>{r.name}</td>
              <td><Tc>00:00:00:00</Tc></td>
              <td><Tc>00:00:30:06</Tc></td>
              <td><Tc>00:00:30:05</Tc></td>
            </tr>
          ))}
        </tbody>
      </TimeTable>
    </Row>
    <Row $top={6} $cols="136px 1fr" $indent={3}>
      <div>
        <Label htmlFor="effect">Effect</Label>
        <SelectBox><Triangle /><Select id="effect"><option>Slow</option></Select></SelectBox>
      </div>
      <Controls $gap={9} $top={14}>
        {effectPaths.map((_, i) => (
          <IconButton key={i} type="button" $on={i === 0} aria-label={`Transition ${i + 1}`}><EffectIcon index={i} /></IconButton>
        ))}
      </Controls>
    </Row>
    <Row $top={8}>
      <Label htmlFor="comment">Broadcast comment</Label>
      <LineInput id="comment" $faint $empty placeholder="Enter a comment" />
    </Row>
    <Row $top={5}><Caption>Version comment</Caption></Row>
    <Spacer />
    <Box>
      <BoxTitle><Triangle up color={c.purple} />Audio</BoxTitle>
      <Row $top={8}>
        <Label htmlFor="audio">Effect</Label>
        <SelectBox><Triangle /><Select id="audio"><option>Default</option></Select></SelectBox>
      </Row>
    </Box>
    <Box $open>
      <BoxTitle><Triangle up color={c.purple} />Business rules</BoxTitle>
      <Label $dim htmlFor="interstitial">Interstitial</Label>
      <Controls $gap={12}>
        <Toggle id="interstitial" type="checkbox" $dim />
        <TcInput aria-label="Interstitial timecode" defaultValue="00:00:00:00" />
        <Muted>Interstitial : None</Muted>
      </Controls>
      <Row $top={7}><Caption>Commercial</Caption></Row>
      <Radios>
        <label><Radio type="radio" name="quota" defaultChecked />No</label>
        <label><Radio type="radio" name="quota" />Commercial in quota</label>
        <label><Radio type="radio" name="quota" />Commercial not in quota</label>
      </Radios>
      <Caption>P. Guidance</Caption>
    </Box>
  </Form>
);

const Status = styled.footer`
  display: grid;
  grid-template-columns: 345px 225px 1fr;
  height: 31px;
  flex: none;
  padding-left: 8px;
  font-size: 12px;
  line-height: 31px;
`;

export default function App() {
  return (
    <Window>
      <Global />
      <Header>
        <ClockBar>
          <ClockSide>
            <MiniClock>15:00<small>25</small></MiniClock>
            <Brand><PlayLogo />PLAY</Brand>
          </ClockSide>
          <BigClock>00:27:16</BigClock>
        </ClockBar>
        <ChannelTile>β</ChannelTile>
        <ChannelInfo>
          <TitleRow>
            <ChannelTitle><PlayRing /><span>BETA &gt; Main1</span><Gears /></ChannelTitle>
            <OnAir>ON AIR</OnAir>
          </TitleRow>
          <Counters>
            <Counter $color={c.teal}><Hand />00:50:38</Counter>
            <Counter $color={c.blue} $wide><Dish />00:30:38</Counter>
            <Counter><Warning /></Counter>
            <Counter><Chips /></Counter>
            <Counter><Stopwatch /></Counter>
            <Loops><Loop label="1" /><Loop label="24" /></Loops>
          </Counters>
        </ChannelInfo>
        <MenuArea>
          <Menu>
            <a href="#channel">Channel</a>
            <a href="#edit">Edit</a>
            <a href="#layout">Layout</a>
            <a href="#admin">Admin</a>
          </Menu>
          <WindowButtons>
            <button aria-label="Minimise"><svg width="14" height="14" viewBox="0 0 14 14" stroke="#ddd"><path d="M0 6.5 H14" /></svg></button>
            <button aria-label="Maximise"><svg width="14" height="14" viewBox="0 0 14 14" fill="none" stroke="#ddd"><path d="M.5 .5 H13.5 V13.5 H.5Z" /></svg></button>
            <button aria-label="Close"><svg width="14" height="14" viewBox="0 0 14 14" stroke="#ddd"><path d="M1 1 L13 13 M13 1 L1 13" /></svg></button>
          </WindowButtons>
        </MenuArea>
      </Header>
      <Main>
        <Left>
          <Upper>
            <Rail>
              <RailButton $tone="#ff9800">α<Badge><PlayBadge /></Badge></RailButton>
              <RailButton $tone="#c4c4c4" $light $big>
                β<Badge $big><PlayBadge /></Badge><Badge $right $big><AntennaBadge /></Badge>
              </RailButton>
              <RailButton $tone="#ff9800" $light>β<Badge><PlayBadge /></Badge></RailButton>
              <RailButton $tone="#999" aria-label="Help"><Lifebuoy /></RailButton>
              <RailButton $tone="#999">α<Badge><EditBadge /></Badge></RailButton>
            </Rail>
            <Playlist />
            <PlaylistScroll><Scrollbar share={18} /></PlaylistScroll>
          </Upper>
          <Lower>
            <Branding />
            <Tabs>
              <Tab>Library</Tab>
              <Tab $active>Branding Library</Tab>
            </Tabs>
          </Lower>
        </Left>
        <EditorColumn>
          <Panel>
            <PanelTitle>Editor<Pin /></PanelTitle>
            <EditorTools>
              <button aria-label="Add event"><AddEvent /></button>
              <button aria-label="Add comment"><AddComment /></button>
              <button aria-label="Add group"><AddGroup /></button>
              <button aria-label="Add palette"><AddPalette /></button>
            </EditorTools>
            <EventBar>
              <div>Event</div>
              <button aria-label="Reload event"><Refresh size={25} /></button>
              <EventActions>
                <button aria-label="Undo"><Undo /></button>
                <button aria-label="Save"><Save /></button>
              </EventActions>
              <button aria-label="Cancel"><RedX /></button>
            </EventBar>
            <ScrollArea>
              <EditorForm />
              <Scrollbar share={60} />
            </ScrollArea>
          </Panel>
          <Tabs>
            <Tab $active>Editor</Tab>
            <Tab>Search</Tab>
            <Tab>Log (91)</Tab>
            <Tab>Countdown</Tab>
          </Tabs>
        </EditorColumn>
      </Main>
      <Status>
        <span>Playlist : test_demo_120623</span>
        <span>Lines : 87</span>
        <span>Duration : 07:41:09</span>
      </Status>
    </Window>
  );
}
